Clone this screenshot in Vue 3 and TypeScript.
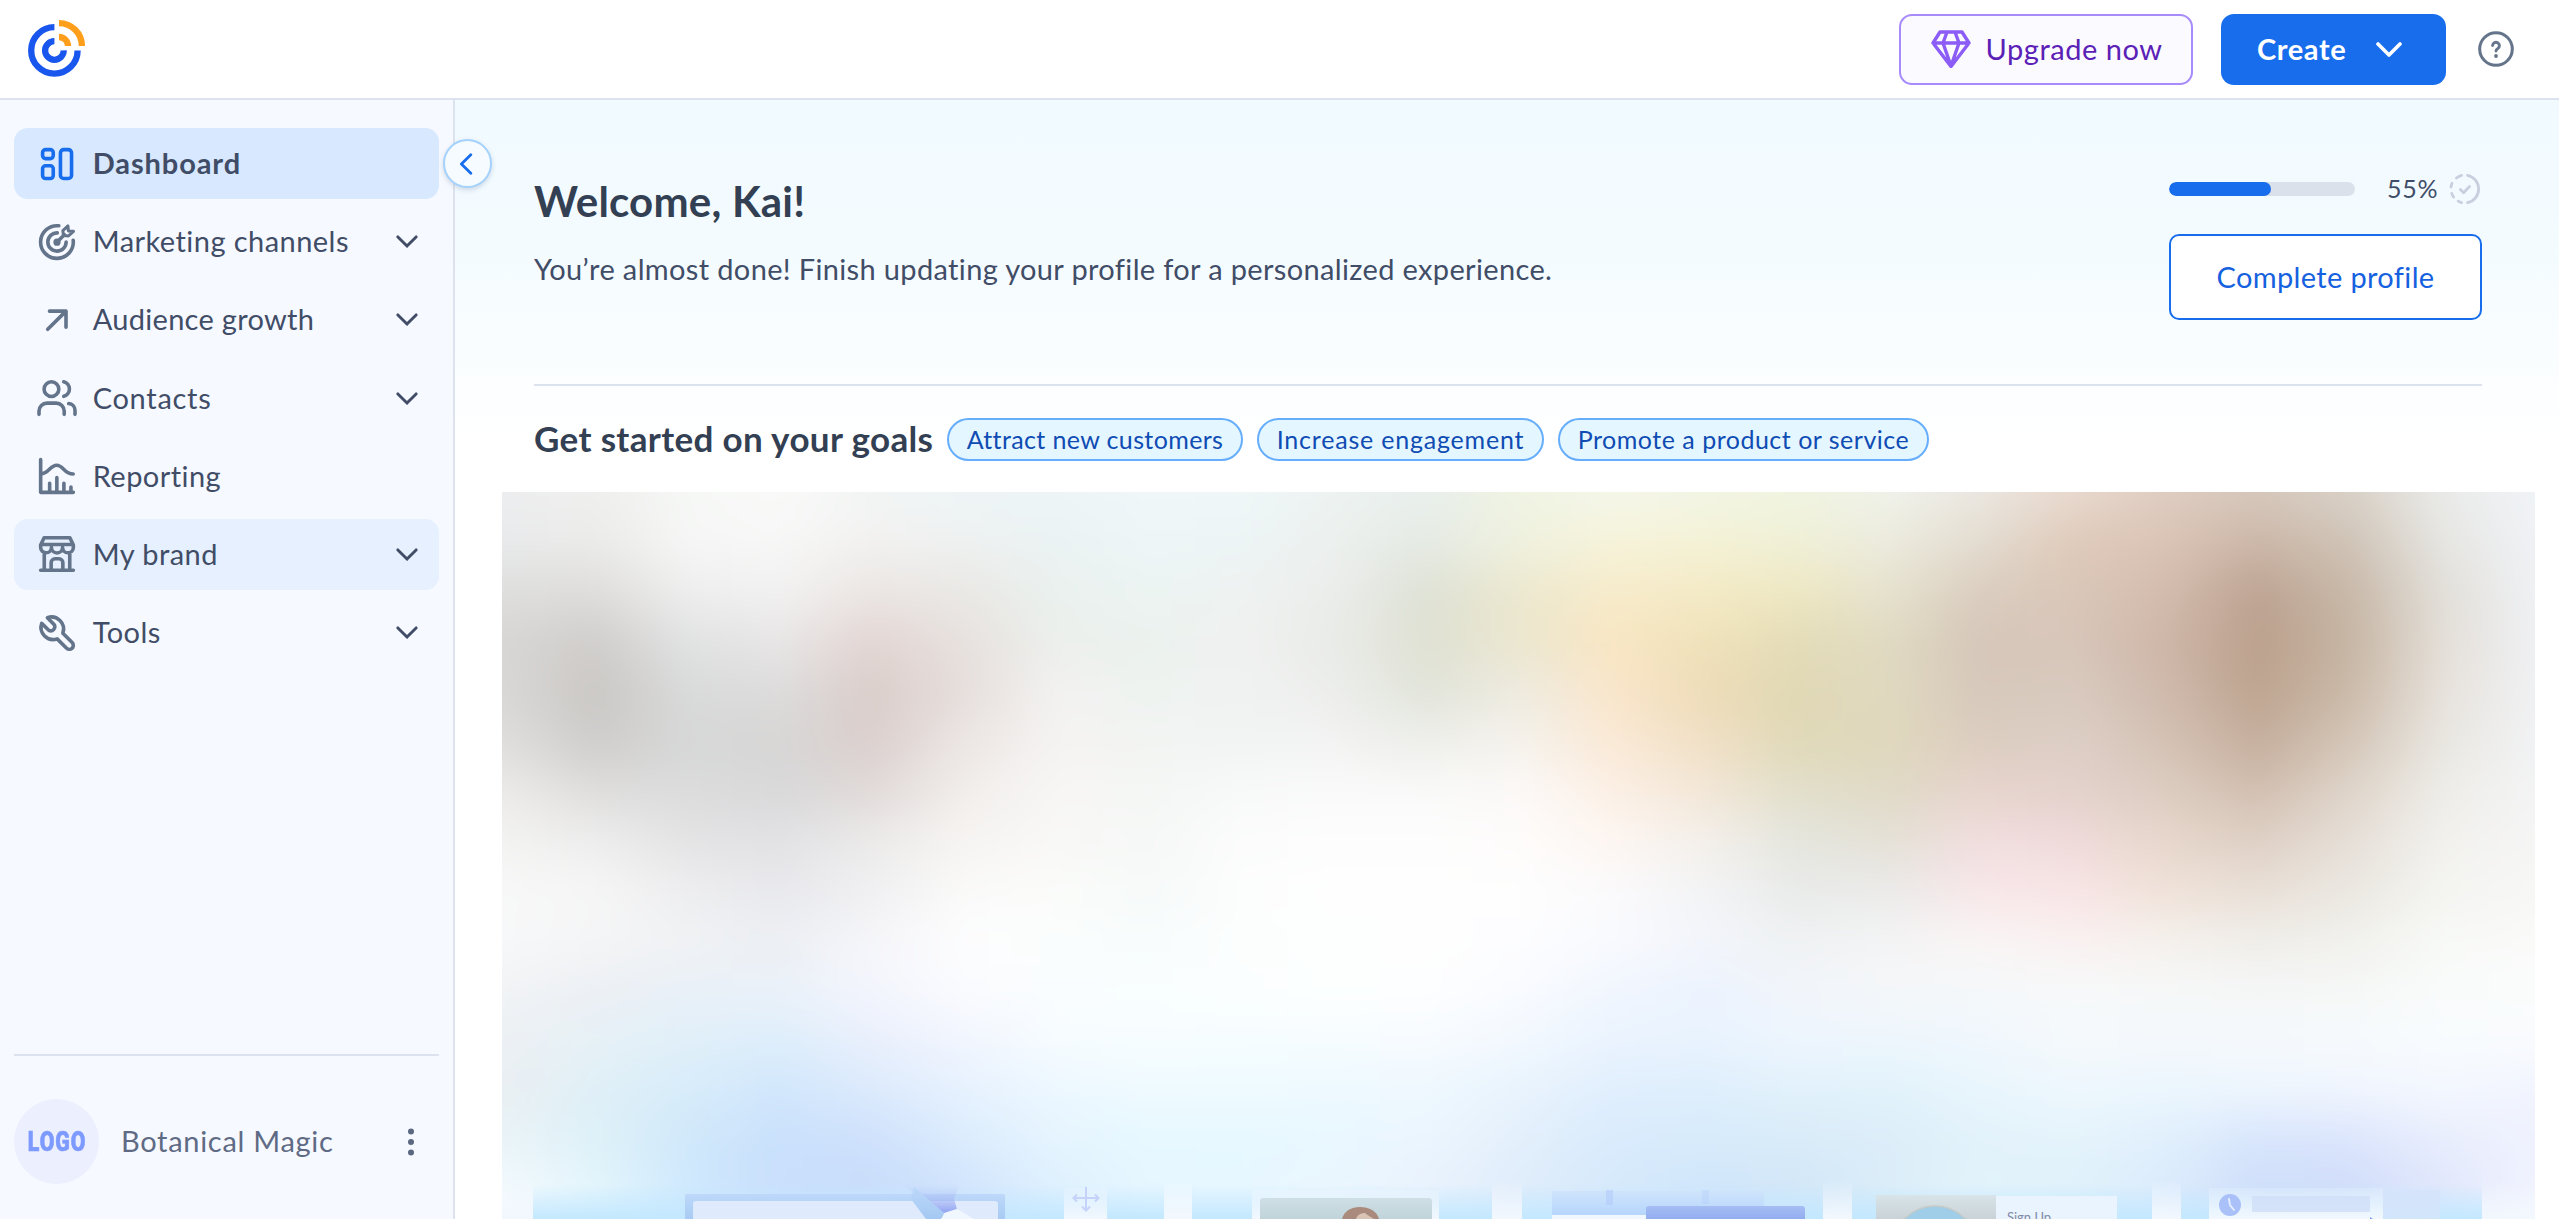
<script setup lang="ts">
interface NavItem {
  id: string
  label: string
  expandable: boolean
  state?: 'active' | 'hover'
}

const navItems: NavItem[] = [
  { id: 'dashboard', label: 'Dashboard', expandable: false, state: 'active' },
  { id: 'channels', label: 'Marketing channels', expandable: true },
  { id: 'growth', label: 'Audience growth', expandable: true },
  { id: 'contacts', label: 'Contacts', expandable: true },
  { id: 'reporting', label: 'Reporting', expandable: false },
  { id: 'store', label: 'My brand', expandable: true, state: 'hover' },
  { id: 'tools', label: 'Tools', expandable: true },
]

const goals: { id: string; label: string }[] = [
  { id: 'attract', label: 'Attract new customers' },
  { id: 'engage', label: 'Increase engagement' },
  { id: 'promote', label: 'Promote a product or service' },
]

const progress = 55

// Colour mesh of the frosted preview: one row of stops per 50px band edge.
const mesh: string[][] = [
  'edeeef efefee f6f8f6 f9faf8 f2f5f4 eef5f6 edf5f7 f0f7f9 eff7f8 edf3f1 e9efec f0f4e3 f4f6ea f3f5e5 f0f4e0 f0f2ea ebe7e1 e9d9cf dfcdc1 d6c7bc d9d1c7 eaebe9 f0f3f7',
  'e9eaeb ebebe9 f5f6f5 f7f7f7 f2f1f0 eef1f0 ebf2f3 edf5f7 edf4f5 ecf0ee e5eae4 eff1df f6f3da f4f2d6 f0f0d7 ecebde e3dcd0 dfcaba dac4b6 ccb7a8 cfc3b6 e6e6e2 eff1f5',
  'dededd dedddb eeeeee f2f1f1 ebe6e3 eae8e5 eaf1ee ecf4f2 eef2f1 ebedeb dee1d5 ece8cf f7ebcb f4eac6 eee8c2 e6e2cf dacdbf dac7b9 d3bcae bda392 c8b8a8 e2dfd9 eff1f4',
  'd8d6d4 d0cdcb e1e2e3 e8e6e6 e3d5d3 e7e1de ecefec ebf1ed f0f1f0 e9ebe8 dfe1d3 ebe6cf f9e6c3 efe2ba e4dcb8 e0dac2 d5c6b9 d8c6ba ceb6a8 bba08c c6b5a3 e4dfd8 eff0f3',
  'dad8d7 cac7c4 d9dada dddcdc dacdca e6dedb f3f2f1 eef3f0 f0f2f2 edeeec e1e4da eeebe0 fae6cc eedcb8 e0d8b4 e0d9c0 d6c8bb d9cabf cfbaad bda48f cbbaa9 e7e2dc f0f1f3',
  'dfdedc cfcdcb d6d7d7 d7d6d5 dbcfcd ece6e4 f5f3f2 f2f4f2 f2f4f4 f2f3f2 eeefeb f5f2ec fae9d6 f1e0c6 e0d9b8 e0d8bd dccdc0 ddcfc6 d5c2b5 c5ae9d d4c6b8 e9e7e1 f1f2f4',
  'ecebea dfdedd dcdcdd d9d9da e1dad9 f1eeec f8f6f5 f4f7f5 f8f9f9 fafafa f9faf9 fcf9f8 fcf0e6 f3e7d8 e2dfcb e0dac7 e7d4cd e4d1cc dccdc1 d2bfb1 dfd5ca eeede9 f3f4f4',
  'f3f3f2 efeeee e4e4e5 e2e2e5 ecebea f7f4f2 f8f8f6 f6f8f7 fbfcfb fcfdfc fdfdfd fefcfb fdf6f2 f4f0eb e5e6df e5e1d7 f1dedf f0dbdb e7d7cc dfd0c5 e6dfd8 f2f1ee f5f5f5',
  'f8f8f8 f6f6f6 eeeef0 e9e9ee f0f0f2 fafaf9 fbfcfa f6faf9 fcfdfd fefefe fefefe fefefe fbfafc f3f4f6 e9ebea ebebea f8e7e9 f8e5e6 f0e2d9 e9e0d7 ebe8e1 f4f5f1 f7f7f6',
  'f7f8f9 f4f5f6 f0f2f4 eceff3 f6f6fa fdfdfe fafdfd f8fcfc fcfefe fdffff fefefe fdfdff f8fafe f3f5fb eff2f3 f4f4f5 faf5f5 faf1f1 f5f1ed f0eeea f1f1ed f8faf7 fafaf9',
  'f1f3f5 eceff4 e9f0f8 eaf1f9 f3f5fd fafbfe fafdff f9feff fbfeff fdffff fdfeff f9fbff f1f6fe ecf3fe f2f5fb f4f7f9 f4f8fa f7f9fa f6f8f8 f5f7f7 f6f8f7 f9fbfb fafcfc',
  'ecf0f4 e6f1f6 e0eff9 ddeefb e9effc f1f5fe f6fcff f7fdff f6fdff f6fcff f7fbff f2f8fe eaf3fe e8f3fe edf5fe edf6fd f0f7fd f5f9fc f4f8fc f5f9fc f6fafd f8fcfe f9fbfe',
  'e9eff2 dfeff7 d7ecfa d1e6fc dbeafc e6f1fe ecf7ff eefaff eefaff edf9ff eef8fe e8f3fd e0eefd deeefc e1f1fb e1f2fb e8f5fc edf7fd ebf6fe edf5fe f0f5fe f3f7fe f1f4fe',
  'eaf4f8 def1f8 d0e8fa c9e0fc cee0fc dbecfd e5f4fe e6f8ff e6f8ff e9f7ff ebf5fe e3effb d9ebfc d7ebfb d9ebf8 dcedf9 e2f2fb e4f3fb e0effc d6e4fc dae4fc e8edfd eff2fe',
  'f4fafe e4f6fc cfe9fe cadffc c8ddfb d1e3fd def0fe e6f6ff e7f7ff ebf6fe e9f2fd dfecfb d6e9fb cfe5fb d2e6f8 dbedf8 e2f3fb dff1fb dcebfc cfdefa d0ddfa e0e6fc f1f3fe',
  'f8fcff e4f6fd cfe9fe cae0fc c8dffb d1e6fd def1fe e6f6ff e9f7ff ebf6fe e9f4fd dfeefb d6e9fb cfe5fb d2e8fa d8ecfa e0f3fb dff1fb d8ebfc cfe2fa d0e2fa e0ecfc f6f8fe',
].map((row) => row.split(' ').map((c) => `#${c}`))

// The mesh overhangs the clipped preview by 50px on every side so that its blur has no fading edge.
const OVERHANG = 50
const PREVIEW_WIDTH = 2033

const rowGradient = (row: string[]): string => {
  const step = PREVIEW_WIDTH / (row.length - 1)
  const stops = row.map((c, i) => `${c} ${(OVERHANG + i * step).toFixed(1)}px`)
  return `linear-gradient(to right, ${stops.join(', ')})`
}

const edges = [mesh[0], ...mesh]
const bands = edges.slice(0, -1).map((row, i) => ({
  from: rowGradient(row),
  to: rowGradient(edges[i + 1]),
}))
</script>

<template>
  <div class="app">
    <header class="topbar">
      <svg class="brand" viewBox="0 0 60 60" fill="none" stroke-width="6.3">
        <g stroke="#1856ed">
          <path d="M27.4 8.2A23.2 23.2 0 1 0 50.6 31.4" />
          <path d="M27.4 22.2A9.3 9.3 0 1 0 36.7 31.4" />
        </g>
        <g stroke="#ff9e1a">
          <path d="M32 4.1A22.9 22.9 0 0 1 54.9 27" />
          <path d="M32 18A9 9 0 0 1 41 27" />
        </g>
      </svg>
      <div class="actions">
        <button class="btn upgrade">
          <svg class="gem" viewBox="0 0 40 38" fill="none" stroke="#8b5cf6" stroke-width="3.4" stroke-linejoin="round" stroke-linecap="round">
            <path d="M9 2h22l7 11-18 23.5L2 13zM2 13h36M16 2l-4 11 8 23M24 2l4 11-8 23" />
          </svg>
          <span>Upgrade now</span>
        </button>
        <button class="btn create">
          <span>Create</span>
          <svg class="create-chev" viewBox="0 0 26 15" fill="none" stroke="#fff" stroke-width="3.6" stroke-linecap="round" stroke-linejoin="round">
            <path d="M2 2l11 11L24 2" />
          </svg>
        </button>
        <svg class="help" viewBox="0 0 36 36" fill="none" stroke="#64748b" stroke-width="3" stroke-linecap="round">
          <circle cx="18" cy="18" r="16.3" />
          <path d="M14.6 14.6a3.4 3.4 0 1 1 5.2 2.9c-1.2.7-1.8 1.2-1.8 2.6" stroke-width="2.9" />
          <circle cx="18" cy="25" r="1.9" fill="#64748b" stroke="none" />
        </svg>
      </div>
    </header>

    <div class="body">
      <aside class="sidebar">
        <nav class="nav">
          <a v-for="item in navItems" :key="item.id" class="nav-item" :class="item.state ? [item.state, item.id] : item.id">
            <svg class="nav-icon" viewBox="0 0 24 24" fill="none" stroke="currentColor" stroke-width="2.4" stroke-linecap="round" stroke-linejoin="round">
              <template v-if="item.id === 'dashboard'">
                <rect x="2.4" y="2.4" width="7.1" height="6" rx="2" />
                <rect x="2.4" y="13.2" width="7.1" height="8.5" rx="2" />
                <rect x="14.3" y="2.4" width="7.4" height="19.3" rx="2.2" />
              </template>
              <template v-else-if="item.id === 'channels'">
                <path d="M13.2 1.2A10.9 10.9 0 1 0 22.8 10.8" />
                <path d="M12.2 5.9A6.1 6.1 0 1 0 18.1 12" />
                <path d="M11.9 12.2l5-5.1" />
                <circle cx="12" cy="12.1" r="1.2" fill="currentColor" />
                <path d="M15.9 4.4l3.4-3.1.3 3.3 3.4.3-3.4 3.1-3.3-.3z" stroke-width="2" />
              </template>
              <path v-else-if="item.id === 'growth'" d="M5.8 18.2L18 6.1M7 6.1h11v10.7" />
              <template v-else-if="item.id === 'contacts'">
                <circle cx="8.3" cy="6.1" r="4.9" />
                <path d="M0 22.9v-2.2a5.3 5.3 0 0 1 5.3-5.3h6.2a5.3 5.3 0 0 1 5.3 5.3v2.2M16.5 1.2a5 5 0 0 1 0 9.7M19.8 15.7a4.6 4.6 0 0 1 4.2 4.6v2.6" />
              </template>
              <path v-else-if="item.id === 'reporting'" d="M1.1 1.1V22.9H22.9M1.3 10.6c5.2 0 6-5.8 10.5-5.8s5 5.9 11 5.9M7.1 22V16.9M11.9 22v-8.9M16.6 22V16.9M21.3 22v-2.6" />
              <path v-else-if="item.id === 'store'" d="M3.4 1.2H20.6L22.9 6v1.6a3.6 3.6 0 0 1-7.2 0 3.7 3.7 0 0 1-7.4 0 3.6 3.6 0 0 1-7.2 0V6zM1.4 5.7H22.6M3.5 11v11.5M20.5 11v11.5M1.1 22.8h21.8M8.1 22.4v-4.6a2.6 2.6 0 0 1 2.6-2.6h2.6a2.6 2.6 0 0 1 2.6 2.6v4.6" />
              <path v-else d="M5.6 1.8A8.1 8.1 0 0 1 15.9 12.1l6.2 6.3a2.6 2.6 0 0 1-3.7 3.7L12.1 15.9A8.1 8.1 0 0 1 1.8 5.6L6 9.7a2.4 2.4 0 0 0 3.7 0 2.4 2.4 0 0 0 0-3.7z" />
            </svg>
            <span class="nav-label">{{ item.label }}</span>
            <svg v-if="item.expandable" class="chev" viewBox="0 0 22 13" fill="none" stroke="#414d67" stroke-width="2.9" stroke-linecap="round" stroke-linejoin="round">
              <path d="M1.9 1.9l9.1 9.2 9.1-9.2" />
            </svg>
          </a>
        </nav>

        <div class="account">
          <div class="avatar"><span>LOGO</span></div>
          <span class="account-name">Botanical Magic</span>
          <svg class="dots" viewBox="0 0 8 28" fill="#5b6880">
            <circle cx="4" cy="3.6" r="3" />
            <circle cx="4" cy="14" r="3" />
            <circle cx="4" cy="24.4" r="3" />
          </svg>
        </div>

        <button class="collapse" aria-label="Collapse">
          <svg viewBox="0 0 14 22" fill="none" stroke="#186ded" stroke-width="2.8" stroke-linecap="round" stroke-linejoin="round">
            <path d="M11.8 1.8L2.4 11l9.4 9.2" />
          </svg>
        </button>
      </aside>

      <main class="content">
        <section class="welcome">
          <div class="welcome-text">
            <h1>Welcome, Kai!</h1>
            <p>You’re almost done! Finish updating your profile for a personalized experience.</p>
          </div>
          <div class="profile">
            <div class="progress-row">
              <div class="track"><div class="fill" :style="{ width: progress + '%' }"></div></div>
              <span class="percent">{{ progress }}%</span>
              <svg class="badge" viewBox="0 0 32 32" fill="none" stroke="#c9cfdf" stroke-width="2.8" stroke-linecap="round" stroke-linejoin="round">
                <path d="M18.5 2.3a14 14 0 0 1 0 27.4M12.6 29.6a14 14 0 0 1-3.4-1.5M4.6 24a14 14 0 0 1-1.9-3.6M2 14a14 14 0 0 1 1-3.7M7.4 5a14 14 0 0 1 5.2-2.6" />
                <path d="M11.4 16.6l3.2 3.2 6-6.4" />
              </svg>
            </div>
            <button class="complete"><span>Complete profile</span></button>
          </div>
        </section>

        <section class="goals">
          <h2>Get started on your goals</h2>
          <span v-for="goal in goals" :key="goal.id" class="pill" :class="goal.id"><span>{{ goal.label }}</span></span>
        </section>

        <section class="preview">
          <div class="mesh">
            <div v-for="(band, i) in bands" :key="i" class="band" :style="{ backgroundImage: band.from }">
              <div class="band-next" :style="{ backgroundImage: band.to }"></div>
            </div>
          </div>
          <svg class="cards" viewBox="502 1169 2033 50">
            <defs>
              <linearGradient id="sky" x1="0" y1="1184" x2="0" y2="1219" gradientUnits="userSpaceOnUse">
                <stop offset="0" stop-color="#c3e8ff" stop-opacity="0" />
                <stop offset="1" stop-color="#c3e8ff" />
              </linearGradient>
              <linearGradient id="gap" x1="0" y1="1180" x2="0" y2="1219" gradientUnits="userSpaceOnUse">
                <stop offset="0" stop-color="#f3f8fe" stop-opacity="0" />
                <stop offset="1" stop-color="#f3f8fe" />
              </linearGradient>
              <linearGradient id="frame" x1="0" y1="0" x2="0" y2="1">
                <stop offset="0" stop-color="#bdd8fa" />
                <stop offset="1" stop-color="#a4c8f2" />
              </linearGradient>
              <linearGradient id="ribbon" x1="0" y1="1184" x2="0" y2="1214" gradientUnits="userSpaceOnUse">
                <stop offset="0" stop-color="#b9c8f7" stop-opacity="0" />
                <stop offset="1" stop-color="#8c9df0" />
              </linearGradient>
              <linearGradient id="photo" x1="0" y1="0" x2="0" y2="1">
                <stop offset="0" stop-color="#cfdfe6" />
                <stop offset="1" stop-color="#b9cfd3" />
              </linearGradient>
              <linearGradient id="block" x1="0" y1="0" x2="0" y2="1">
                <stop offset="0" stop-color="#a6bdf4" />
                <stop offset="1" stop-color="#88a5ee" />
              </linearGradient>
              <linearGradient id="box" x1="0" y1="0" x2="0" y2="1">
                <stop offset="0" stop-color="#cfe4fb" />
                <stop offset="1" stop-color="#b6d6fd" />
              </linearGradient>
              <linearGradient id="stone" x1="0" y1="0" x2="0" y2="1">
                <stop offset="0" stop-color="#d8e4e9" />
                <stop offset="1" stop-color="#c8d1d6" />
              </linearGradient>
            </defs>
            <g fill="url(#sky)">
              <rect x="533" y="1180" width="631" height="39" />
              <rect x="1192" y="1180" width="300" height="39" />
              <rect x="1522" y="1180" width="301" height="39" />
              <rect x="1852" y="1180" width="300" height="39" />
              <rect x="2181" y="1180" width="301" height="39" />
            </g>
            <g fill="url(#gap)">
              <rect x="502" y="1180" width="31" height="39" />
              <rect x="1164" y="1180" width="28" height="39" />
              <rect x="1492" y="1180" width="30" height="39" />
              <rect x="1823" y="1180" width="29" height="39" />
              <rect x="2152" y="1180" width="29" height="39" />
              <rect x="2482" y="1180" width="53" height="39" />
            </g>
            <rect x="685" y="1194" width="320" height="30" rx="2" fill="url(#frame)" />
            <rect x="693" y="1201" width="305" height="30" rx="3" fill="#dfebfd" />
            <path d="M900 1183H960L954 1199 957 1209 944 1213z" fill="url(#ribbon)" />
            <path d="M911 1199L926 1219H942L944 1213 914 1187z" fill="url(#frame)" />
            <path d="M941 1219L945 1213 957 1209 974 1219z" fill="#f1f7ff" />
            <rect x="1064" y="1188" width="43" height="31" fill="url(#gap)" />
            <path d="M1074 1198h24M1086 1187v23M1077 1194.5l-3.5 3.5 3.5 3.5M1095 1194.5l3.5 3.5-3.5 3.5M1082 1206.5l4 4 4-4" fill="none" stroke="#c5d2f9" stroke-width="2" />
            <rect x="1252" y="1190" width="187" height="30" fill="url(#gap)" />
            <rect x="1260" y="1198" width="172" height="30" rx="3" fill="url(#photo)" />
            <path d="M1342 1219c2-8 9-12 18-12s17 4 19 12z" fill="#a98a7d" />
            <path d="M1356 1219c1-4 5-6 9-6 2 2 6 4 9 6z" fill="#d9c3b5" />
            <rect x="1552" y="1191" width="212" height="24" fill="url(#box)" />
            <rect x="1552" y="1215" width="94" height="5" fill="#f0f7ff" />
            <rect x="1606" y="1190" width="7" height="15" fill="#b3cbfa" opacity=".6" />
            <rect x="1702" y="1190" width="7" height="14" fill="#b3cbfa" opacity=".35" />
            <rect x="1646" y="1206" width="159" height="20" rx="3" fill="url(#block)" />
            <rect x="1876" y="1195" width="120" height="25" fill="url(#stone)" />
            <circle cx="1935" cy="1248" r="42" fill="#a0cde7" stroke="#c4cbc8" stroke-width="1.5" />
            <rect x="1996" y="1196" width="121" height="25" fill="#eaf4fe" />
            <text x="2007" y="1222" class="card-text">Sign Up</text>
            <rect x="2209" y="1188" width="174" height="32" fill="url(#gap)" />
            <circle cx="2230" cy="1205" r="11" fill="#a9c1f8" />
            <path d="M2229 1199l1 6 4 5" fill="none" stroke="#e3edff" stroke-width="2" stroke-linecap="round" />
            <rect x="2252" y="1196" width="118" height="16" fill="#cfdff8" opacity=".8" />
            <path d="M2370 1219v-2l3 2z" fill="#7d9cf0" />
            <rect x="2383" y="1190" width="57" height="30" fill="#d4e4fa" opacity=".8" />
          </svg>
        </section>
      </main>
    </div>
  </div>
</template>

<style>
body {
  overflow: hidden;
}
</style>

<style scoped>
.app {
  height: 1219px;
  display: flex;
  flex-direction: column;
  overflow: hidden;
  background: #fff;
  font-family: Lato, "Liberation Sans", sans-serif;
  font-size: 29px;
  font-variant-ligatures: none;
  color: #414d67;
}
button {
  font: inherit;
  letter-spacing: inherit;
  padding: 0;
  margin: 0;
}
span,
h1,
h2,
p {
  white-space: nowrap;
}
svg {
  display: block;
  flex: none;
}
.topbar {
  box-sizing: border-box;
  height: 100px;
  flex: none;
  display: flex;
  align-items: center;
  justify-content: space-between;
  padding: 0 45px 0 27px;
  border-bottom: 2px solid #dde3ee;
}
.brand {
  width: 60px;
  height: 60px;
}
.actions {
  display: flex;
  align-items: center;
}
.btn {
  box-sizing: border-box;
  height: 71px;
  border-radius: 13px;
  display: flex;
  align-items: center;
}
.btn span {
  padding-bottom: 2px;
}
.upgrade {
  width: 294px;
  border: 2px solid #a78bfa;
  background: #fbfaff;
  color: #5b21b6;
  padding-left: 30px;
  letter-spacing: 0.55px;
}
.gem {
  width: 40px;
  height: 38px;
  margin-right: 14.5px;
}
.create {
  width: 225px;
  margin-left: 28px;
  border: 0;
  background: #186ded;
  color: #fff;
  font-weight: 700;
  letter-spacing: 0.6px;
  justify-content: space-between;
  padding: 0 44px 0 36px;
}
.create-chev {
  width: 26px;
  height: 15px;
}
.help {
  width: 36px;
  height: 36px;
  margin-left: 32px;
}
.body {
  flex: 1;
  display: flex;
  min-height: 0;
}
.sidebar {
  position: relative;
  z-index: 1;
  box-sizing: border-box;
  width: 455px;
  flex: none;
  background: #f6f9ff;
  border-right: 2px solid #dde3ee;
  padding: 28px 14px 0;
  display: flex;
  flex-direction: column;
  justify-content: space-between;
}
.nav {
  display: flex;
  flex-direction: column;
  gap: 7.2px;
}
.nav-item {
  box-sizing: border-box;
  height: 71px;
  border-radius: 14px;
  display: flex;
  align-items: center;
  padding: 0 21px 0 25px;
}
.nav-icon {
  width: 36px;
  height: 36px;
  margin-right: 17.7px;
  color: #64748b;
  overflow: visible;
}
.nav-label {
  flex: 1;
  padding-bottom: 2px;
  letter-spacing: 0.45px;
}
.growth .nav-label {
  letter-spacing: 0.3px;
}
.contacts .nav-label {
  letter-spacing: 0.7px;
}
.nav-item.active {
  background: #d7e8ff;
  font-weight: 700;
}
.nav-item.active .nav-label {
  letter-spacing: 0.9px;
}
.nav-item.active .nav-icon {
  color: #186ded;
}
.nav-item.hover {
  background: #e6f0fe;
}
.chev {
  width: 22px;
  height: 13px;
}
.account {
  box-sizing: border-box;
  height: 165px;
  border-top: 2px solid #dde3ee;
  display: flex;
  align-items: center;
  padding: 8px 24px 0 0;
}
.avatar {
  width: 85px;
  height: 85px;
  border-radius: 50%;
  background: #eceffe;
  color: #7d9aff;
  display: flex;
  align-items: center;
  justify-content: center;
  margin-right: 22px;
}
.avatar span {
  font-family: Roboto, sans-serif;
  font-weight: 900;
  font-size: 27px;
  -webkit-text-stroke: 0.6px #7d9aff;
  letter-spacing: 1.2px;
  margin-right: -1.2px;
  transform: scaleX(0.79);
}
.account-name {
  flex: 1;
  color: #5f6b85;
  padding-bottom: 2px;
  letter-spacing: 0.7px;
}
.dots {
  width: 8px;
  height: 28px;
}
.collapse {
  position: absolute;
  box-sizing: border-box;
  right: -39px;
  top: 39px;
  width: 49px;
  height: 49px;
  border-radius: 50%;
  border: 2px solid #a5d2fc;
  background: #f6fbff;
  box-shadow: 0 2px 5px rgba(60, 80, 120, 0.2);
  display: flex;
  align-items: center;
  justify-content: center;
  padding-right: 4px;
}
.collapse svg {
  width: 14px;
  height: 22px;
}
.content {
  flex: 1;
  min-width: 0;
  display: flex;
  flex-direction: column;
  background: linear-gradient(#f1faff 0, #f3fbff 140px, #fff 340px);
}
.welcome {
  box-sizing: border-box;
  height: 286px;
  margin: 0 77px 0 79px;
  border-bottom: 2px solid #dde3ee;
  display: flex;
  justify-content: space-between;
}
.welcome-text {
  padding-top: 74px;
}
h1 {
  margin: 0;
  font-size: 42px;
  line-height: 54px;
  font-weight: 700;
  letter-spacing: 0.2px;
  color: #333f53;
}
p {
  margin: 23px 0 0;
  line-height: 36px;
  letter-spacing: 0.35px;
}
.profile {
  width: 313px;
  padding-top: 72px;
}
.progress-row {
  height: 33px;
  display: flex;
  align-items: center;
}
.track {
  width: 186px;
  height: 14px;
  border-radius: 7px;
  background: #dbe1eb;
  overflow: hidden;
}
.fill {
  height: 100%;
  border-radius: 7px;
  background: #186ded;
}
.percent {
  width: 62px;
  margin-left: 32px;
  font-size: 25px;
  letter-spacing: 0.8px;
  padding-bottom: 2px;
}
.badge {
  width: 32px;
  height: 32px;
}
.complete {
  box-sizing: border-box;
  width: 313px;
  height: 86px;
  margin-top: 29px;
  border: 2px solid #186ded;
  border-radius: 10px;
  background: #fff;
  color: #1561e0;
  letter-spacing: 0.35px;
  padding-bottom: 2px;
}
.goals {
  height: 106px;
  margin-left: 79px;
  display: flex;
  align-items: center;
  gap: 14px;
}
h2 {
  width: 399px;
  margin: 0 0 2px;
  font-size: 35px;
  font-weight: 700;
  letter-spacing: 0.35px;
  color: #333f53;
}
.pill {
  box-sizing: border-box;
  height: 43px;
  border: 2px solid #66aefc;
  border-radius: 22px;
  background: #e4f6ff;
  color: #0f4cb3;
  font-size: 25px;
  display: flex;
  align-items: center;
  justify-content: center;
}
.attract {
  width: 296px;
  letter-spacing: 0.38px;
}
.engage {
  width: 287px;
  letter-spacing: 0.8px;
}
.promote {
  width: 371px;
  letter-spacing: 0.5px;
}
.preview {
  height: 727px;
  margin: 0 24px 0 47px;
  overflow: hidden;
  display: grid;
  grid-template: 727px / 2033px;
}
.mesh {
  grid-area: 1 / 1;
  margin: -50px -50px 0;
  filter: blur(15px);
}
.band {
  height: 50px;
}
.band-next {
  height: 100%;
  -webkit-mask-image: linear-gradient(transparent, #000);
  mask-image: linear-gradient(transparent, #000);
}
.cards {
  grid-area: 1 / 1;
  align-self: end;
  z-index: 1;
  width: 2033px;
  height: 50px;
}
.card-text {
  font-size: 13px;
  fill: #7f8aa8;
}
</style>
